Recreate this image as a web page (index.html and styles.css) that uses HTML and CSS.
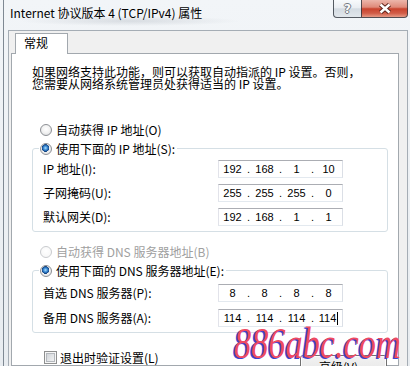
FILE: index.html
```html
<!DOCTYPE html>
<html lang="zh-CN">
<head>
<meta charset="utf-8">
<title>Internet 协议版本 4 (TCP/IPv4) 属性</title>
<link rel="stylesheet" href="styles.css">
</head>
<body>
<div class="window">
  <div class="titlebar">
    <span class="title">Internet 协议版本 4 (TCP/IPv4) 属性</span>
    <div class="caption">
      <div class="cap-btn help"><span class="q">?</span></div>
      <div class="cap-btn close">
        <svg width="14" height="11" viewBox="0 0 14 11">
          <path d="M2.5 1.5 L11.5 9.5 M11.5 1.5 L2.5 9.5" stroke="#5a231b" stroke-width="4.4" fill="none"/>
          <path d="M2.5 1.5 L11.5 9.5 M11.5 1.5 L2.5 9.5" stroke="#ffffff" stroke-width="2.4" fill="none"/>
        </svg>
      </div>
    </div>
  </div>
  <div class="client">
    <div class="tabstrip"><div class="tab">常规</div></div>
    <div class="panel">
      <p class="intro">如果网络支持此功能，则可以获取自动指派的 IP 设置。否则，<br>您需要从网络系统管理员处获得适当的 IP 设置。</p>

      <div class="opt top-opt"><span class="radio"></span><span>自动获得 IP 地址(O)</span></div>
      <fieldset class="group">
        <legend><span class="opt"><span class="radio on"></span><span>使用下面的 IP 地址(S):</span></span></legend>
        <div class="rows">
          <span class="lbl">IP 地址(I):</span>
          <div class="ipbox"><span class="seg">192</span><span class="dot">.</span><span class="seg">168</span><span class="dot">.</span><span class="seg">1</span><span class="dot">.</span><span class="seg">10</span></div>
          <span class="lbl">子网掩码(U):</span>
          <div class="ipbox"><span class="seg">255</span><span class="dot">.</span><span class="seg">255</span><span class="dot">.</span><span class="seg">255</span><span class="dot">.</span><span class="seg">0</span></div>
          <span class="lbl">默认网关(D):</span>
          <div class="ipbox"><span class="seg">192</span><span class="dot">.</span><span class="seg">168</span><span class="dot">.</span><span class="seg">1</span><span class="dot">.</span><span class="seg">1</span></div>
        </div>
      </fieldset>

      <div class="opt top-opt second disabled"><span class="radio off"></span><span>自动获得 DNS 服务器地址(B)</span></div>
      <fieldset class="group">
        <legend><span class="opt"><span class="radio on"></span><span>使用下面的 DNS 服务器地址(E):</span></span></legend>
        <div class="rows dns">
          <span class="lbl">首选 DNS 服务器(P):</span>
          <div class="ipbox"><span class="seg">8</span><span class="dot">.</span><span class="seg">8</span><span class="dot">.</span><span class="seg">8</span><span class="dot">.</span><span class="seg">8</span></div>
          <span class="lbl">备用 DNS 服务器(A):</span>
          <div class="ipbox"><span class="seg">114</span><span class="dot">.</span><span class="seg">114</span><span class="dot">.</span><span class="seg">114</span><span class="dot">.</span><span class="seg last">114<span class="caret"></span></span></div>
        </div>
      </fieldset>

      <div class="bottom">
        <div class="chk"><span class="box"></span><span>退出时验证设置(L)</span></div>
        <div class="btn">高级(V)...</div>
      </div>
    </div>
  </div>
</div>
<div class="watermark">886abc.com</div>
</body>
</html>
```
FILE: styles.css
```css
* { box-sizing: border-box; }

html, body { margin: 0; padding: 0; }

body {
  width: 410px;
  height: 366px;
  overflow: hidden;
  position: relative;
  background:
    radial-gradient(ellipse 110px 5px at 130px 21px, rgba(150, 158, 168, 0.28), rgba(150, 158, 168, 0)),
    linear-gradient(#f2f5f8, #e8ecf0);
  font-family: "Noto Sans CJK SC", "Noto Sans", sans-serif;
  font-size: 12px;
  color: #000;
}

.window {
  margin-left: 3px;
  border-left: 1px solid #7f8993;
  padding: 0 2px 0 4px;
  height: 366px;
}

/* title bar */
.titlebar {
  height: 30px;
  display: flex;
  justify-content: space-between;
  align-items: flex-start;
}

.title {
  padding-left: 2px;
  line-height: 26px;
  font-size: 12px;
  white-space: nowrap;
}

.caption { display: flex; }

.cap-btn {
  height: 18px;
  display: flex;
  align-items: center;
  justify-content: center;
  border: 1px solid rgba(45, 52, 60, 0.8);
  border-top: none;
}

.help {
  width: 28px;
  border-right: none;
  border-radius: 0 0 0 4px;
  background: linear-gradient(#f8fafc 0%, #eaeef2 45%, #d4dbe2 52%, #e2e7ec 100%);
}

.q {
  font: bold 12px/1 "DejaVu Sans", sans-serif;
  color: #fbfbfb;
  text-shadow: 1px 0 #737a82, -1px 0 #737a82, 0 1px #737a82, 0 -1px #737a82;
}

.close {
  width: 47px;
  border-radius: 0 0 4px 0;
  background: linear-gradient(#ecb6ab 0%, #df8a7a 42%, #c9432e 52%, #d15d48 78%, #e79a86 100%);
}

/* client */
.client {
  height: 336px;
  border: 1px solid #a5adb5;
  border-bottom: none;
  background: #f0f0f0;
}

.tabstrip {
  display: flex;
  padding: 2px 0 0 6px;
}

.tab {
  width: 53px;
  height: 21px;
  margin-bottom: -1px;
  border: 1px solid #a2a8ae;
  border-bottom: none;
  background: #fff;
  padding-left: 8px;
  line-height: 18px;
  z-index: 1;
}

.panel {
  margin: 0 8px 0 2px;
  height: 313px;
  border: 1px solid #a2a8ae;
  background: #fff;
}

.intro {
  margin: 12px 0 0 20px;
  line-height: 12px;
  white-space: nowrap;
}

.opt {
  display: flex;
  align-items: center;
  gap: 4px;
  height: 19px;
  white-space: nowrap;
}

.top-opt { margin: 30px 0 0 27px; }
.top-opt.second { margin-top: 10px; }

.disabled { color: #a0a0a0; }

.radio {
  flex: none;
  width: 12px;
  height: 12px;
  margin-left: 1px;
  border-radius: 50%;
  border: 1px solid #8d9095;
  background: radial-gradient(circle at 50% 40%, #ffffff 0, #f3f3f3 45%, #d6d8db 100%);
}

.radio.on {
  background:
    radial-gradient(circle at 45% 40%, #b5e0fb 0, #4f9ee0 1.5px, #1d5da8 3px, #0f3f78 3.6px, rgba(255,255,255,0) 4px),
    radial-gradient(circle at 50% 40%, #ffffff 0, #f1f1f1 50%, #d8dadd 100%);
}

.radio.off {
  border-color: #c9cbce;
  background: radial-gradient(circle at 50% 40%, #ffffff 0, #f4f4f4 100%);
}

.group {
  margin: 0 10px 0 20px;
  padding: 0 0 5px 0;
  border: 1px solid #d5dfe5;
  border-radius: 3px;
  min-width: 0;
}

.group legend {
  margin-left: 6px;
  padding: 0 2px 0 0;
}

.rows {
  display: grid;
  grid-template-columns: 175px 125px;
  align-items: center;
  row-gap: 6px;
  padding-left: 10px;
  margin-top: 2px;
}

.rows.dns {
  row-gap: 7px;
  margin-top: 4px;
}

.lbl { white-space: nowrap; line-height: 16px; }

.ipbox {
  display: flex;
  height: 18px;
  border: 1px solid;
  border-color: #abadb3 #dbdfe6 #e3e9ef #e2e3ea;
  background: #fff;
  font: 11px/16px "Liberation Sans", Arial, sans-serif;
}

.seg {
  flex: 1;
  text-align: center;
  display: flex;
  justify-content: center;
  align-items: center;
}

.dot {
  width: 5px;
  text-align: center;
}

.caret {
  display: inline-block;
  width: 1px;
  height: 13px;
  margin-left: 1px;
  background: #000;
}

.bottom {
  display: flex;
  justify-content: space-between;
  align-items: flex-start;
  margin: 16px 11px 0 32px;
}

.chk {
  display: flex;
  align-items: center;
  gap: 3px;
  height: 16px;
  white-space: nowrap;
}

.box {
  flex: none;
  width: 13px;
  height: 13px;
  border: 1px solid #8e8f8f;
  background: linear-gradient(135deg, #c9cdd2 0%, #e6e8ea 60%, #f7f7f7 100%);
  box-shadow: inset 0 0 0 1px #f6f6f6, inset 0 0 0 2px #b4b8bd;
}

.btn {
  margin-top: 6px;
  width: 87px;
  height: 23px;
  border: 1px solid #707070;
  border-radius: 3px;
  background: linear-gradient(#f2f2f2 0%, #ebebeb 50%, #dddddd 51%, #cfcfcf 100%);
  box-shadow: inset 0 0 0 1px #fcfcfc;
  text-align: center;
  line-height: 21px;
  white-space: nowrap;
}

.watermark {
  position: absolute;
  left: 234px;
  top: 322px;
  font: italic 44px/1 "Liberation Serif", "Times New Roman", serif;
  color: #ef4a62;
  text-shadow: -2px 1px 0 #3d41d2;
  transform: scaleX(0.78);
  transform-origin: 0 0;
  white-space: nowrap;
}
```
